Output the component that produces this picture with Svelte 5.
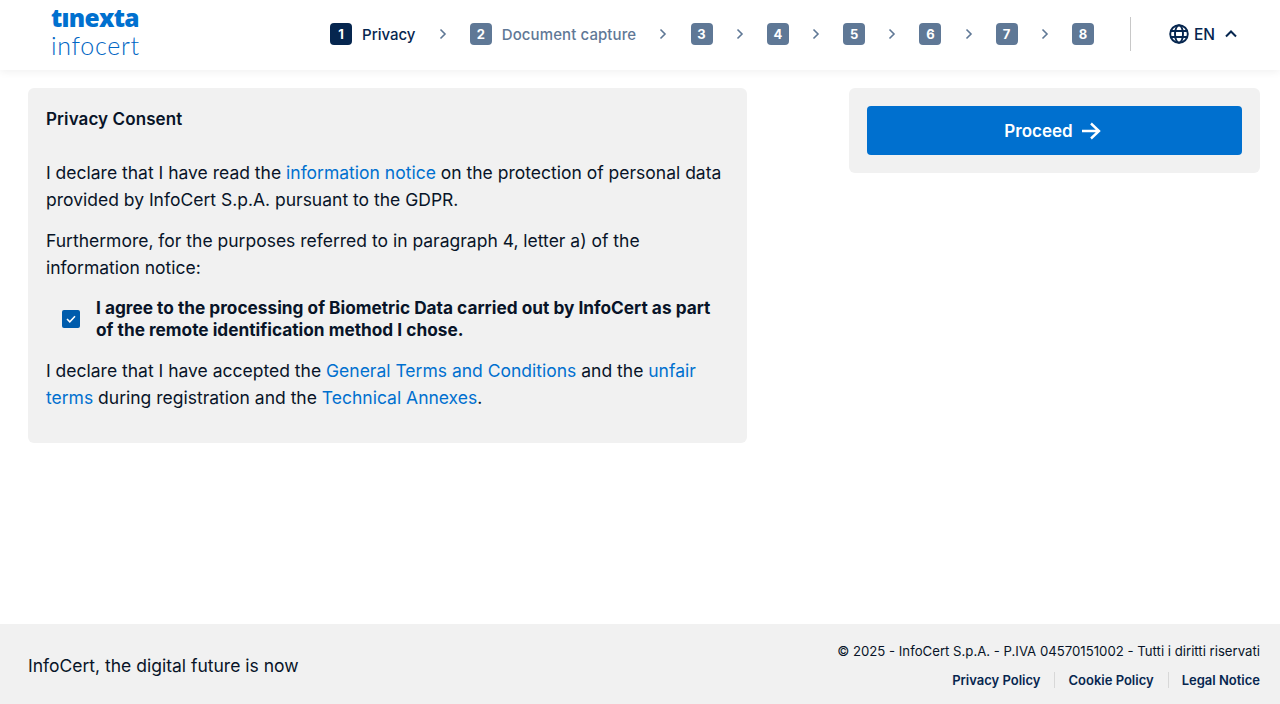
<script>
    let steps = [
        { n: 1, label: 'Privacy', active: true },
        { n: 2, label: 'Document capture' },
        { n: 3 },
        { n: 4 },
        { n: 5 },
        { n: 6 },
        { n: 7 },
        { n: 8 }
    ];
    let agreed = $state(true);
</script>

<div class="page">
    <header>
        <div class="logo">
            <span class="tinexta">tınexta</span>
            <span class="infocert">infocert</span>
        </div>
        <nav class="steps">
            {#each steps as step, i}
                {#if i > 0}
                    <svg class="sep" width="8" height="12" viewBox="0 0 8 12"><path d="M1.5 1.5 6 6l-4.500 4.500" /></svg>
                {/if}
                <div class="step" class:active={step.active}>
                    <span class="num">{step.n}</span>
                    {#if step.label}<span class="label">{step.label}</span>{/if}
                </div>
            {/each}
        </nav>
        <div class="lang">
            <svg class="globe" width="20" height="20" viewBox="0 0 20 20">
                <circle cx="10" cy="10" r="8.800" />
                <ellipse cx="10" cy="10" rx="4" ry="8.800" />
                <path d="M2 7h16M2 13h16" />
            </svg>
            <span>EN</span>
            <svg class="chev" width="12" height="8" viewBox="0 0 12 8"><path d="M1 6.500 6 1.500l5 5" /></svg>
        </div>
    </header>

    <main>
        <section class="card consent">
            <h2>Privacy Consent</h2>
            <p>I declare that I have read the <a href="#info">information notice</a> on the protection of personal data provided by InfoCert S.p.A. pursuant to the GDPR.</p>
            <p>Furthermore, for the purposes referred to in paragraph 4, letter a) of the information notice:</p>
            <label class="check">
                <input type="checkbox" bind:checked={agreed} />
                <span class="box">
                    <svg width="10" height="8" viewBox="0 0 10 8"><path d="M1 4l2.800 2.800L9 1.200" /></svg>
                </span>
                <span class="check-text">I agree to the processing of Biometric Data carried out by InfoCert as part of the remote identification method I chose.</span>
            </label>
            <p>I declare that I have accepted the <a href="#terms">General Terms and Conditions</a> and the <a href="#unfair">unfair terms</a> during registration and the <a href="#annex">Technical Annexes</a>.</p>
        </section>
        <aside class="card action">
            <button type="button">
                Proceed
                <svg width="20" height="18" viewBox="0 0 20 18"><path d="M1 9h17M10 1.500 18 9l-8 7.500" /></svg>
            </button>
        </aside>
    </main>

    <footer>
        <div class="slogan">InfoCert, the digital future is now</div>
        <div class="legal">
            <div class="copy">© 2025 - InfoCert S.p.A. - P.IVA 04570151002 - Tutti i diritti riservati</div>
            <div class="links">
                <a href="#privacy">Privacy Policy</a>
                <a href="#cookie">Cookie Policy</a>
                <a href="#legal">Legal Notice</a>
            </div>
        </div>
    </footer>
</div>

<style>
    :global(body) {
        margin: 0;
        background: #fff;
        font-family: Inter, "Liberation Sans", sans-serif;
        color: #081428;
    }

    .page {
        height: 704px;
        display: flex;
        flex-direction: column;
        overflow: hidden;
    }

    header {
        height: 70px;
        flex: none;
        box-sizing: border-box;
        display: flex;
        align-items: center;
        padding: 0 43px 2px 51px;
        box-shadow: 0 2px 8px rgba(0, 0, 0, 0.06);
    }

    .logo {
        display: flex;
        flex-direction: column;
        width: 89px;
        color: #0070cf;
        line-height: 1;
    }

    .tinexta {
        font-family: "Open Sans", sans-serif;
        font-weight: 800;
        font-size: 24.500px;
        letter-spacing: -0.7px;
        height: 27px;
        margin-top: -4px;
    }

    .infocert {
        font-family: Lato, sans-serif;
        font-weight: 300;
        font-size: 25px;
        letter-spacing: 0.7px;
        color: #0066c4;
    }

    .steps {
        margin-left: auto;
        display: flex;
        align-items: center;
        gap: 23.150px;
    }

    .step {
        display: flex;
        align-items: center;
        gap: 10px;
    }

    .num {
        width: 22px;
        height: 22px;
        border-radius: 4px;
        background: #5f7896;
        color: #fff;
        font-size: 13px;
        font-weight: 700;
        display: flex;
        align-items: center;
        justify-content: center;
    }

    .label {
        font-size: 15px;
        font-weight: 500;
        letter-spacing: 0.1px;
        color: #5f7896;
    }

    .active .num {
        background: #06264f;
    }

    .active .label {
        color: #06264f;
        letter-spacing: 0;
    }

    .sep path {
        fill: none;
        stroke: #5f7896;
        stroke-width: 1.600;
    }

    .lang {
        margin-left: 36px;
        padding-left: 38px;
        height: 34px;
        border-left: 1px solid #c8c8c8;
        display: flex;
        align-items: center;
        gap: 5px;
        font-size: 15.500px;
        font-weight: 500;
        color: #06264f;
    }

    .globe * {
        fill: none;
        stroke: #06264f;
        stroke-width: 1.900;
    }

    .chev {
        margin-left: 5px;
    }

    .chev path {
        fill: none;
        stroke: #06264f;
        stroke-width: 2;
    }

    main {
        flex: 1;
        display: flex;
        align-items: flex-start;
        justify-content: space-between;
        padding: 18px 20px 0 28px;
    }

    .card {
        background: #f1f1f1;
        border-radius: 6px;
        box-sizing: border-box;
    }

    .consent {
        width: 719px;
        height: 355px;
        padding: 18px;
        font-size: 17.500px;
        line-height: 27px;
    }

    h2 {
        margin: 0 0 26px;
        font-size: 17px;
        font-weight: 600;
        letter-spacing: 0.1px;
        line-height: 27px;
    }

    p {
        margin: 0 0 14px;
    }

    a {
        color: #0070cf;
        text-decoration: none;
    }

    .check {
        display: flex;
        align-items: center;
        gap: 16px;
        padding: 2px 0 0 16px;
        margin-bottom: 16px;
        font-size: 17.250px;
        line-height: 22px;
        font-weight: 700;
    }

    .check input {
        position: absolute;
        opacity: 0;
    }

    .box {
        flex: none;
        width: 18px;
        height: 18px;
        border-radius: 2px;
        background: #005cac;
        display: flex;
        align-items: center;
        justify-content: center;
    }

    .box path {
        fill: none;
        stroke: #fff;
        stroke-width: 1.500;
    }

    .action {
        width: 411px;
        height: 85px;
        padding: 18px;
    }

    button {
        width: 100%;
        height: 49px;
        border: 0;
        border-radius: 4px;
        padding: 0 4px 0 0;
        background: #0070cf;
        color: #fff;
        font: 600 17px Inter, sans-serif;
        display: flex;
        align-items: center;
        justify-content: center;
        gap: 8px;
    }

    button path {
        fill: none;
        stroke: #fff;
        stroke-width: 2.400;
    }

    footer {
        height: 80px;
        flex: none;
        box-sizing: border-box;
        background: #f1f1f1;
        display: flex;
        align-items: center;
        justify-content: space-between;
        padding: 3px 20px 0 28px;
    }

    .slogan {
        font-size: 17.500px;
    }

    .legal {
        text-align: right;
    }

    .copy {
        font-size: 13.200px;
        margin-bottom: 13px;
    }

    .links {
        display: flex;
        justify-content: flex-end;
    }

    .links a {
        font-size: 13px;
        font-weight: 600;
        color: #06264f;
        padding: 0 14px 0 13px;
        border-left: 1px solid #d8d8d8;
    }

    .links a:first-child {
        border-left: 0;
    }

    .links a:last-child {
        padding-right: 0;
    }
</style>
